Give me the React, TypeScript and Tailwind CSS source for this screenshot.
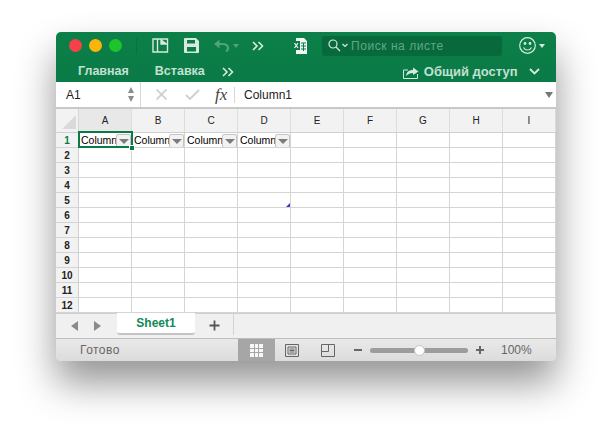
import React from "react";

const cols = ["A", "B", "C", "D", "E", "F", "G", "H", "I"];
const rows = [1, 2, 3, 4, 5, 6, 7, 8, 9, 10, 11, 12];
const font = { fontFamily: '"Liberation Sans", Arial, sans-serif' };

function Chevrons({ className = "" }: { className?: string }) {
  return (
    <svg width="12" height="10" viewBox="0 0 12 10" fill="none" stroke="currentColor" strokeWidth="1.6" className={className}>
      <path d="M1 1l4 4-4 4M6.500 1l4 4-4 4" />
    </svg>
  );
}

function FilterButton() {
  return (
    <span className="absolute right-0 top-[1px] flex h-[14px] w-[15px] items-center justify-center rounded-[2px] border border-[#c4c4c4] bg-[#f2f2f2]">
      <span className="h-0 w-0 border-x-[5px] border-t-[5px] border-x-transparent border-t-[#7c7c7c]" />
    </span>
  );
}

export default function App() {
  return (
    <div className="h-[441px] w-[612px] overflow-hidden bg-white pl-[56px] pt-[32px]" style={font}>
      <div className="flex h-[329px] w-[500px] flex-col overflow-hidden rounded-[5px] bg-[#f0f0f0] shadow-[0_22px_38px_rgba(0,0,0,0.42)]">
        {/* Title + ribbon */}
        <div className="h-[50px] shrink-0 bg-gradient-to-b from-[#0c8048] to-[#0a7a46] text-[#c3e0d2]">
          <div className="flex h-[27px] items-center">
            <div className="ml-[13px] flex gap-[7px]">
              <span className="h-[13px] w-[13px] rounded-full bg-[#f5424a]" />
              <span className="h-[13px] w-[13px] rounded-full bg-[#fbb40b]" />
              <span className="h-[13px] w-[13px] rounded-full bg-[#1ec42c]" />
            </div>
            <span className="ml-[14px] h-[16px] w-px bg-[#0e6f43]" />
            <svg className="ml-[15px]" width="17" height="15" viewBox="0 0 17 15" fill="none" stroke="#d6eadf" strokeWidth="1.4">
              <path d="M1 1h14.500v13H1zM5.500 1v13" />
              <path d="M9 1v5h6.500" fill="#d6eadf" />
            </svg>
            <svg className="ml-[15px]" width="15" height="15" viewBox="0 0 15 15">
              <path fillRule="evenodd" fill="#d6eadf" d="M1 0h11l3 3v11a1 1 0 0 1-1 1H1a1 1 0 0 1-1-1V1a1 1 0 0 1 1-1zM3 2v3.500h8V2zM3 9v4.500h9V9z" />
            </svg>
            <svg className="ml-[14px]" width="17" height="13" viewBox="0 0 17 13" fill="none" stroke="#4ea47b" strokeWidth="2.200">
              <path d="M1 5l5.500-4.500v9z" fill="#4ea47b" stroke="none" />
              <path d="M5 5h4c3.500 0 6 1.500 6 4 0 1.500-1 3-2 3.500" />
            </svg>
            <span className="ml-[3px] h-0 w-0 border-x-[3px] border-t-[4px] border-x-transparent border-t-[#4ea47b]" />
            <Chevrons className="ml-[13px] text-[#d6eadf]" />
            <svg className="ml-[29px]" width="14" height="16" viewBox="0 0 14 16">
              <path fill="#f2f7f4" d="M3 0h8l3 3v13H3z" />
              <path fill="#0a7a46" d="M0 3h7v9H0z" />
              <path stroke="#f2f7f4" strokeWidth="1.200" d="M1.500 5l3.500 5M5 5l-3.500 5" />
              <path stroke="#0a7a46" strokeWidth="1" d="M8 5h5M8 8h5M8 11h5M10.500 5v8" />
            </svg>
            <div className="ml-[15px] flex h-[20px] w-[180px] items-center rounded-[3px] bg-[#086a3c] pl-[6px]">
              <svg width="13" height="13" viewBox="0 0 13 13" fill="none" stroke="#d6eadf" strokeWidth="1.200">
                <circle cx="5" cy="5" r="4" />
                <path d="M8 8l4 4" />
              </svg>
              <svg className="ml-[1px]" width="6" height="5" viewBox="0 0 6 5" fill="none" stroke="#d6eadf" strokeWidth="1.200">
                <path d="M.5 1l2.500 2.500L5.500 1" />
              </svg>
              <span className="ml-[3px] text-[12px] tracking-[0.55px] text-[#62a785]">Поиск на листе</span>
            </div>
            <svg className="ml-[17px]" width="17" height="17" viewBox="0 0 17 17" fill="none" stroke="#d6eadf" strokeWidth="1.200">
              <circle cx="8.500" cy="8.500" r="7.800" />
              <circle cx="6" cy="6.500" r=".8" fill="#d6eadf" />
              <circle cx="11" cy="6.500" r=".8" fill="#d6eadf" />
              <path d="M4.500 10.500c1 2 2.500 2.500 4 2.500s3-.5 4-2.500" />
            </svg>
            <span className="ml-[3px] h-0 w-0 border-x-[3px] border-t-[4px] border-x-transparent border-t-[#d6eadf]" />
          </div>
          <div className="flex h-[23px] items-center pt-[2px]">
            <span className="ml-[22px] text-[12.500px] font-bold">Главная</span>
            <span className="ml-[26px] text-[12.500px] font-bold">Вставка</span>
            <Chevrons className="ml-[17px] text-[#d6eadf]" />
            <svg className="ml-[169px]" width="16" height="14" viewBox="0 0 16 14" fill="none" stroke="#d6eadf" strokeWidth="1">
              <path d="M5 5H.500v8.500h14V9" />
              <path d="M3 11c.5-4 3-6 7-6V2.500L15.500 6.500 10 10V8c-3 0-5 1-7 3z" fill="#d6eadf" stroke="none" />
            </svg>
            <span className="ml-[5px] text-[13px] font-bold">Общий доступ</span>
            <svg className="ml-[11px]" width="11" height="7" viewBox="0 0 11 7" fill="none" stroke="#d6eadf" strokeWidth="1.800">
              <path d="M1 1l4.500 4.500L10 1" />
            </svg>
          </div>
        </div>

        {/* Formula bar */}
        <div className="flex h-[27px] shrink-0 items-center border-b-2 border-[#c8c8c8] bg-white">
          <div className="flex h-full w-[85px] shrink-0 items-center justify-between border-r border-[#d8d8d8] pl-[10px] pr-[6px] text-[12px] text-[#222]">
            A1
            <span className="flex flex-col gap-[3px]">
              <span className="h-0 w-0 border-x-[3.500px] border-b-[6px] border-x-transparent border-b-[#8a8a8a]" />
              <span className="h-0 w-0 border-x-[3.500px] border-t-[6px] border-x-transparent border-t-[#8a8a8a]" />
            </span>
          </div>
          <svg className="ml-[15px]" width="11" height="11" viewBox="0 0 11 11" fill="none" stroke="#cfcfcf" strokeWidth="1.800">
            <path d="M.5.500l10 10M10.500.500l-10 10" />
          </svg>
          <svg className="ml-[18px]" width="15" height="11" viewBox="0 0 15 11" fill="none" stroke="#cfcfcf" strokeWidth="1.800">
            <path d="M1 6l4 4 9-9" />
          </svg>
          <span className="ml-[15px] w-[14px] text-[17px] italic leading-none text-[#444]" style={{ fontFamily: '"Liberation Serif", serif' }}>fx</span>
          <span className="ml-[5px] h-[16px] w-px bg-[#d8d8d8]" />
          <span className="ml-[9px] flex-1 text-[12px] text-[#222]">Column1</span>
          <span className="mr-[3px] h-0 w-0 border-x-[4px] border-t-[6px] border-x-transparent border-t-[#777]" />
        </div>

        {/* Grid */}
        <div className="relative flex h-[204px] shrink-0 flex-col overflow-hidden bg-white">
          <div className="flex h-[24px] shrink-0 border-b border-[#cfcfcf] bg-[#f2f2f2]">
            <div className="relative h-full w-[23px] shrink-0 border-r border-[#d6d6d6]">
              <span className="absolute bottom-[3px] right-[2px] h-0 w-0 border-b-[14px] border-l-[14px] border-b-[#dadada] border-l-transparent" />
            </div>
            {cols.map((c, i) => (
              <div key={c} className={`flex h-full w-[53px] shrink-0 items-center justify-center border-r border-[#dcdcdc] text-[10px] text-[#222] ${i === 0 ? "bg-[#e8e8e8] text-[#0a7a46]" : ""}`}>
                {c}
              </div>
            ))}
          </div>
          {rows.map((r) => (
            <div key={r} className="flex h-[15px] shrink-0 border-b border-[#d4d4d4]">
              <div className={`flex h-full w-[23px] shrink-0 items-center justify-center border-r border-[#cfcfcf] bg-[#f2f2f2] text-[10px] font-bold ${r === 1 ? "bg-[#e8e8e8] text-[#0a7a46]" : "text-[#222]"}`}>
                {r}
              </div>
              {cols.map((c, i) => (
                <div key={c} className="relative h-full w-[53px] shrink-0 overflow-hidden border-r border-[#d4d4d4]">
                  {r === 1 && i < 4 && (
                    <>
                      <span className="absolute left-[2px] top-0 text-[10.500px] leading-[15px] text-black">Column1</span>
                      <FilterButton />
                    </>
                  )}
                </div>
              ))}
            </div>
          ))}
          {/* Active cell outline */}
          <div className="absolute left-[22px] top-[22px] h-[17px] w-[55px] border-2 border-[#0a7a46]" />
          <div className="absolute left-[73px] top-[36px] h-[6px] w-[6px] border border-white bg-[#0a7a46]" />
          <div className="absolute left-[230px] top-[94px] h-0 w-0 border-b-[4px] border-l-[4px] border-b-[#3b3bb5] border-l-transparent" />
        </div>

        {/* Sheet tabs */}
        <div className="flex h-[25px] shrink-0 items-start border-t border-[#cfcfcf] bg-[#f0f0f0]">
          <span className="ml-[15px] mt-[7px] h-0 w-0 border-y-[5.500px] border-r-[7px] border-y-transparent border-r-[#8a8a8a]" />
          <span className="ml-[16px] mt-[7px] h-0 w-0 border-y-[5.500px] border-l-[7px] border-y-transparent border-l-[#8a8a8a]" />
          <div className="ml-[16px] mt-[-1px] flex h-[22px] w-[78px] items-center justify-center rounded-b-[3px] border-b-2 border-[#c4c4c4] bg-white text-[12px] font-bold text-[#108a56]">
            Sheet1
          </div>
          <svg className="ml-[14px] mt-[6px]" width="11" height="11" viewBox="0 0 11 11" stroke="#555" strokeWidth="1.800">
            <path d="M5.500.500v10M.500 5.500h10" />
          </svg>
          <span className="ml-[13px] h-[21px] w-px bg-[#d4d4d4]" />
        </div>

        {/* Status bar */}
        <div className="flex h-[23px] shrink-0 items-center border-t border-[#bdbdbd] bg-gradient-to-b from-[#e9e9e9] to-[#dcdcdc] text-[#666]">
          <span className="ml-[24px] w-[158px] text-[12px] tracking-[0.45px]">Готово</span>
          <div className="flex h-full w-[37px] items-center justify-center bg-[#a6a6a6]">
            <svg width="13" height="13" viewBox="0 0 13 13" stroke="#a6a6a6" strokeWidth="1">
              <path d="M0 0h13v13H0z" fill="#f8f8f8" stroke="none" />
              <path d="M0 4.500h13M0 8.500h13M4.500 0v13M8.500 0v13" />
            </svg>
          </div>
          <div className="flex h-full w-[34px] items-center justify-center">
            <svg width="14" height="13" viewBox="0 0 14 13" fill="none" stroke="#666" strokeWidth="1">
              <path d="M.5.500h13v12H.5zM3 3h8v7H3zM4.500 5h5M4.500 6.500h5M4.500 8h5" />
            </svg>
          </div>
          <svg className="ml-[12px]" width="14" height="13" viewBox="0 0 14 13" fill="none" stroke="#666" strokeWidth="1">
            <path d="M.5.500h13v12H.5zM.5 7.500h7V.5" />
          </svg>
          <span className="ml-[19px] h-[2px] w-[8px] bg-[#666]" />
          <div className="relative ml-[8px] h-[5px] w-[98px] rounded-full bg-[#9c9c9c]">
            <span className="absolute left-[44px] top-[-3px] h-[11px] w-[11px] rounded-full border border-[#c4c4c4] bg-white" />
          </div>
          <svg className="ml-[8px]" width="8" height="8" viewBox="0 0 8 8" stroke="#666" strokeWidth="2">
            <path d="M4 0v8M0 4h8" />
          </svg>
          <span className="ml-[17px] text-[12px]">100%</span>
        </div>
      </div>
    </div>
  );
}
